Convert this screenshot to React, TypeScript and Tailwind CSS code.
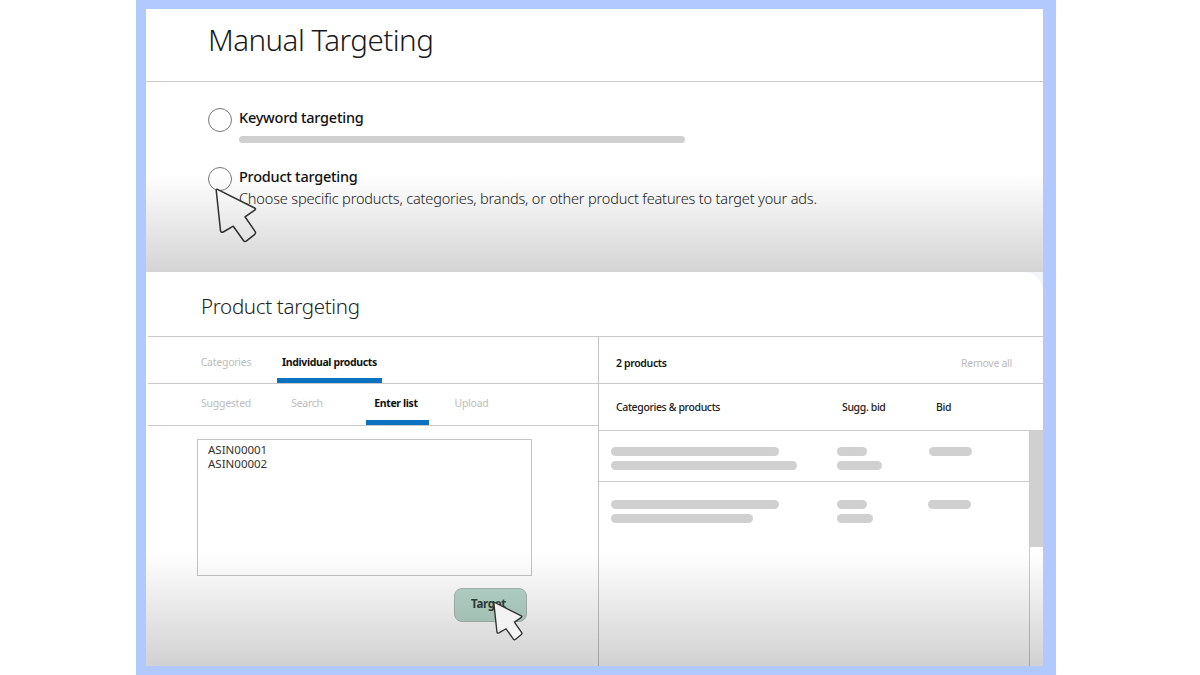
/**
 * App.tsx — Manual targeting walkthrough.
 *
 * Two stacked panels inside a blue frame: the targeting type choice on top,
 * and the product targeting editor (tabs, ASIN list, selected products) below.
 */
import type { ReactNode } from "react";

// ─── Data ────────────────────────────────────────────────────────────────────

interface ProductRow {
  id: number;
  rowClass: string;
  product: string[];
  suggested: string[];
  bid: string;
}

const PRODUCT_ROWS: ProductRow[] = [
  {
    id: 1,
    rowClass: "h-[51px] border-b pt-[15.5px]",
    product: ["w-[168px]", "w-[186px]"],
    suggested: ["w-[30px]", "w-[45px]"],
    bid: "ml-[92px] w-[43px]",
  },
  {
    id: 2,
    rowClass: "pt-[18px]",
    product: ["w-[168px]", "w-[142px]"],
    suggested: ["w-[30px]", "w-[36px]"],
    bid: "ml-[91px] w-[43px]",
  },
];

// ─── Sub-components ──────────────────────────────────────────────────────────

/** Grey placeholder bar. */
function Bar({ className }: { className: string }) {
  return <div className={`h-[9px] rounded-full bg-[#d0d0d0] ${className}`} />;
}

/** Arrow cursor, drawn in a 42x56 box. */
function Cursor({ className, stroke }: { className: string; stroke: number }) {
  return (
    <svg
      viewBox="0 0 42 56"
      className={`pointer-events-none absolute ${className}`}
      stroke="#333"
      strokeWidth={stroke}
      strokeLinejoin="round"
    >
      <path d="M1.2 2.2Q1.1 .8 2.4 1.4L39.6 20Q41.4 21 39.7 22.2L30 28.8L40.2 43.6Q41 45.2 39.8 46.3L31.2 53.2Q29.6 54 28.6 52.8L18.3 38.2L8.2 44Q5.8 45 5.5 42.6Z" />
    </svg>
  );
}

/** Single tab with an optional blue underline. */
function Tab({
  active = false,
  className,
  children,
}: {
  active?: boolean;
  className: string;
  children: ReactNode;
}) {
  return (
    <button
      type="button"
      className={[
        "flex h-full items-start justify-center whitespace-nowrap border-b-[5px] text-[10.5px] leading-4",
        active
          ? "border-[#0a72c0] font-bold tracking-[-0.36px] text-[#111]"
          : "border-transparent tracking-[-0.25px] text-[#bcbcbc]",
        className,
      ].join(" ")}
    >
      {children}
    </button>
  );
}

/** Radio choice with a label and supporting content. */
function Choice({ label, children }: { label: string; children: ReactNode }) {
  return (
    <div className="flex">
      <span className="mr-[7px] mt-px size-6 shrink-0 rounded-full border border-[#777] bg-white" />
      <div>
        <div className="h-[22px] whitespace-nowrap text-[14.5px] font-medium leading-[21px] tracking-[-0.25px] text-[#111]">
          {label}
        </div>
        {children}
      </div>
    </div>
  );
}

// ─── Panels ──────────────────────────────────────────────────────────────────

function ManualTargeting() {
  return (
    <section className="relative h-[263px] bg-white">
      <h1 className="h-[73px] border-b border-[#c9c9c9] pl-[62px] text-[29.5px] font-light leading-[62px] tracking-[-0.52px] text-[#1a1a1a]">
        Manual Targeting
      </h1>
      <div className="flex flex-col pl-[62px] pt-[25px]">
        <div className="h-[59px]">
          <Choice label="Keyword targeting">
            <div className="mt-[6.5px] h-[7px] w-[446px] rounded-sm bg-[#d0d0d0]" />
          </Choice>
        </div>
        <Choice label="Product targeting">
          <p className="whitespace-nowrap text-[14.5px] font-light leading-[21px] tracking-[-0.16px] text-[#222]">
            Choose specific products, categories, brands, or other product features to target your ads.
          </p>
        </Choice>
      </div>
      <Cursor className="left-[69px] top-[179px] h-[56px] w-[42px] fill-white" stroke={1.5} />
      <div className="pointer-events-none absolute inset-x-0 bottom-0 h-[98px] bg-linear-to-b from-black/0 to-black/17" />
    </section>
  );
}

function ListEditor() {
  return (
    <div className="ml-0.5 w-[450px]">
      <div className="flex h-[47px] border-b border-[#c9c9c9] pl-[53px]">
        <Tab className="w-[50px] pt-[17px]">Categories</Tab>
        <Tab active className="-mb-px ml-[26px] w-[105px] pt-[17px]">
          Individual products
        </Tab>
      </div>
      <div className="flex h-[42px] border-b border-[#c9c9c9] pl-[53px]">
        <Tab className="w-[50px] pt-[11px]">Suggested</Tab>
        <Tab className="ml-[40px] w-[32px] pt-[11px]">Search</Tab>
        <Tab active className="ml-[43px] w-[63px] pr-[3px] pt-[11px]">
          Enter list
        </Tab>
        <Tab className="ml-[25px] w-[35px] pt-[11px]">Upload</Tab>
      </div>
      <div className="ml-[49px] mt-[13px] h-[137px] w-[335px] border border-[#c4c4c4] pl-[10px] pt-[3px] text-[11.5px] leading-[14px] text-[#333]">
        <p>ASIN00001</p>
        <p>ASIN00002</p>
      </div>
      <button
        type="button"
        className="ml-[306px] mt-[12px] h-[34px] w-[73px] rounded-lg border border-[#a9b8b2] bg-[#b7d7cb] pb-1 pr-1 text-[11.5px] font-bold leading-[30px] tracking-[-0.3px] text-[#2f413a]"
      >
        Target
      </button>
    </div>
  );
}

function SelectedProducts() {
  return (
    <div className="flex flex-1 flex-col border-l border-[#c4c4c4]">
      <div className="flex h-[47px] items-center justify-between border-b border-[#c9c9c9] pl-[17px] pr-[31px] pt-[7px] text-[10.5px]">
        <span className="font-semibold tracking-[-0.36px] text-[#111]">2 products</span>
        <span className="tracking-[-0.27px] text-[#bcbcbc]">Remove all</span>
      </div>
      <div className="flex h-[47px] items-center border-b border-[#c9c9c9] pl-[17px] pt-px text-[10.5px] font-medium tracking-[-0.37px] text-[#222]">
        <span className="w-[226px]">Categories &amp; products</span>
        <span className="w-[94px]">Sugg. bid</span>
        <span>Bid</span>
      </div>
      <div className="flex flex-1">
        <div className="w-[431px] border-r border-[#c9c9c9]">
          {PRODUCT_ROWS.map((row) => (
            <div key={row.id} className={`flex border-[#c9c9c9] pl-3 ${row.rowClass}`}>
              <div className="w-[226px] space-y-[5px]">
                {row.product.map((w, i) => (
                  <Bar key={i} className={w} />
                ))}
              </div>
              <div className="w-0 space-y-[5px]">
                {row.suggested.map((w, i) => (
                  <Bar key={i} className={w} />
                ))}
              </div>
              <Bar className={row.bid} />
            </div>
          ))}
        </div>
        <div className="-mt-px h-[117px] w-[13px] bg-[#d0d0d0]" />
      </div>
    </div>
  );
}

function ProductTargeting() {
  return (
    <section className="relative h-[394px] bg-[#f3f5fb]">
      <div className="flex h-full flex-col rounded-tr-[20px] bg-white">
        <h2 className="ml-0.5 h-[65px] shrink-0 border-b border-[#c9c9c9] pl-[53px] text-[20.5px] font-light leading-[69px] tracking-[-0.32px] text-[#222]">
          Product targeting
        </h2>
        <div className="flex flex-1">
          <ListEditor />
          <SelectedProducts />
        </div>
      </div>
      <div className="pointer-events-none absolute inset-x-0 bottom-0 h-[114px] bg-linear-to-b from-black/0 to-black/18" />
      <Cursor className="left-[347px] top-[329px] h-[41px] w-[30px] fill-[#f3f3f3]" stroke={1.9} />
    </section>
  );
}

// ─── Main component ──────────────────────────────────────────────────────────

export default function App() {
  return (
    <div className="h-[675px] w-[1200px] overflow-hidden bg-white font-['Noto_Sans',sans-serif]">
      <main className="ml-[136px] h-full w-[920px] bg-[#b2c9ff] pl-[10px] pr-[13px] pt-[9px]">
        <ManualTargeting />
        <ProductTargeting />
      </main>
    </div>
  );
}
